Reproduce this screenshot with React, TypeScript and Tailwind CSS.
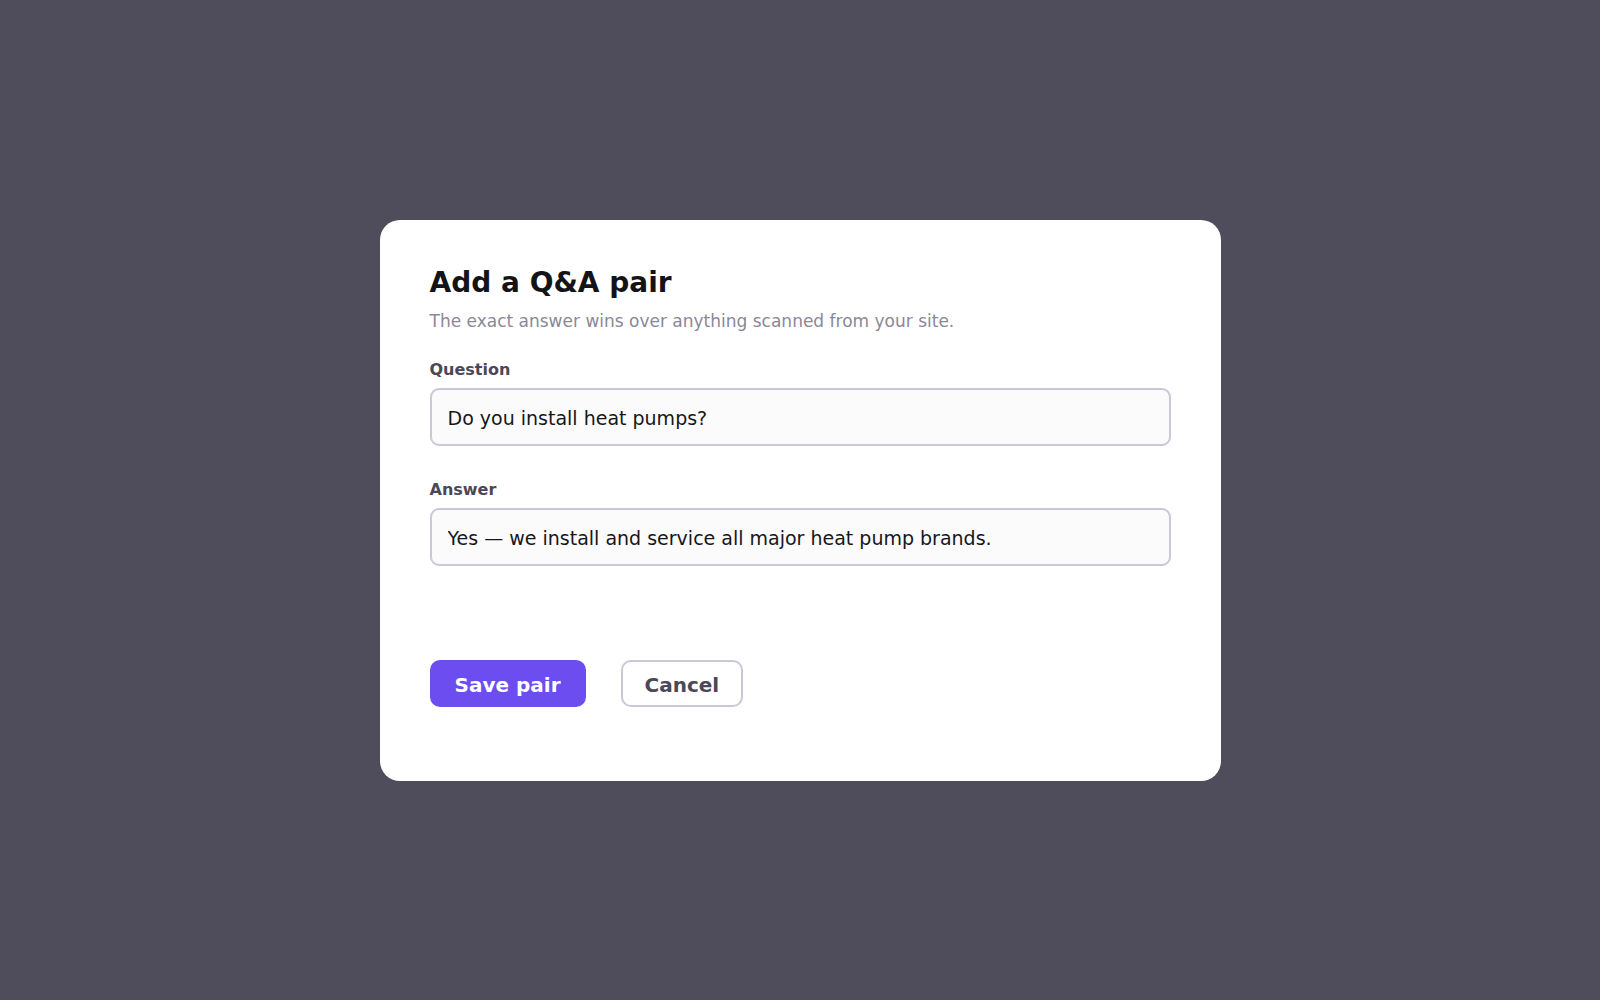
import type { ReactNode } from "react";

function Field({ label, value, className }: { label: string; value: string; className?: string }) {
  return (
    <label className={"block " + (className ?? "")}>
      <span className="block text-[16px] font-bold leading-[20px] text-[#4a4857]">{label}</span>
      <input
        readOnly
        value={value}
        className="mt-2 block h-[58px] w-full rounded-[9px] border-2 border-[#c9c8d6] bg-[#fbfbfb] px-4 pt-[2px] text-[19px] text-[#17161c] outline-none"
      />
    </label>
  );
}

function Button({ children, primary }: { children: ReactNode; primary?: boolean }) {
  return (
    <button
      type="button"
      className={
        primary
          ? "h-[47px] rounded-[10px] border-2 border-[#6c4ef0] bg-[#6c4ef0] px-[23px] pt-[4px] text-[20px] font-bold text-white"
          : "h-[47px] rounded-[10px] border-2 border-[#c9c8d6] bg-white px-[22px] pt-[4px] text-[20px] font-bold text-[#4a4857]"
      }
    >
      {children}
    </button>
  );
}

export default function App() {
  return (
    <div
      className="flex min-h-screen items-center justify-center bg-[#4f4d5b]"
      style={{ fontFamily: '"DejaVu Sans", "Liberation Sans", sans-serif' }}
    >
      <div className="w-[841px] rounded-[20px] bg-white px-[50px] pb-[74px] pt-[46px]">
        <h2 className="text-[28px] font-bold leading-[34px] text-[#141318]">Add a Q&amp;A pair</h2>
        <p className="mt-[10px] text-[17px] leading-[22px] text-[#8a8898]">
          The exact answer wins over anything scanned from your site.
        </p>

        <Field className="mt-[28px]" label="Question" value="Do you install heat pumps?" />
        <Field
          className="mt-[34px]"
          label="Answer"
          value="Yes — we install and service all major heat pump brands."
        />

        <div className="mt-[94px] flex gap-[35px]">
          <Button primary>Save pair</Button>
          <Button>Cancel</Button>
        </div>
      </div>
    </div>
  );
}
